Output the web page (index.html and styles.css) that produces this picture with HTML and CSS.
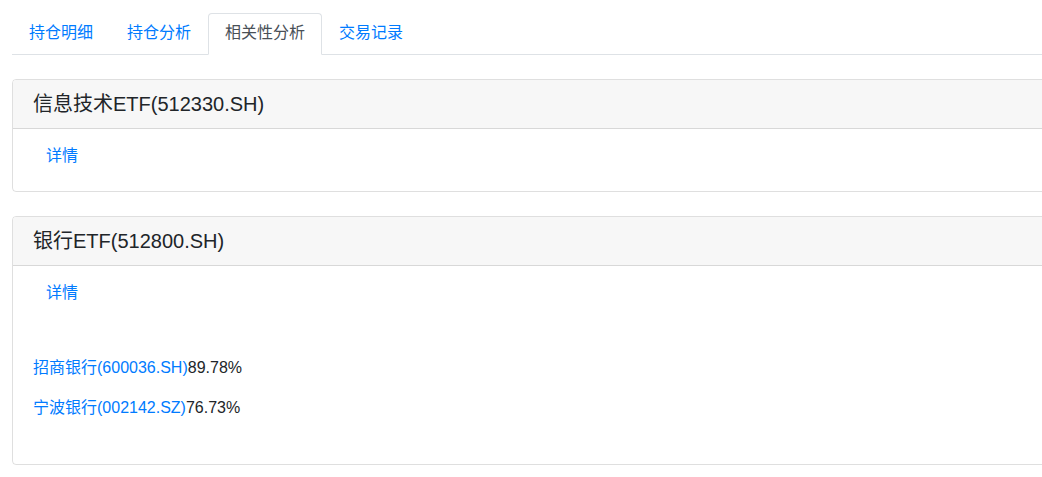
FILE: index.html
```html
<!DOCTYPE html>
<html lang="zh">
<head>
  <meta charset="UTF-8" />
  <meta name="viewport" content="width=device-width, initial-scale=1.0"/>
  <title>相关性分析</title>
  <link rel="stylesheet" href="styles.css">
</head>
<body>
  <div class="page">
    <ul class="nav-tabs">
      <li><a href="#">持仓明细</a></li>
      <li><a href="#">持仓分析</a></li>
      <li><a href="#" class="active">相关性分析</a></li>
      <li><a href="#">交易记录</a></li>
    </ul>

    <div class="card">
      <div class="card-header">信息技术ETF(512330.SH)</div>
      <div class="card-body">
        <a href="#" class="btn-link">详情</a>
      </div>
    </div>

    <div class="card">
      <div class="card-header">银行ETF(512800.SH)</div>
      <div class="card-body">
        <a href="#" class="btn-link">详情</a>
        <div class="results">
          <p><a href="#">招商银行(600036.SH)</a>89.78%</p>
          <p><a href="#">宁波银行(002142.SZ)</a>76.73%</p>
        </div>
      </div>
    </div>
  </div>
</body>
</html>
```

FILE: styles.css
```css
html {
  overflow: hidden;
}

body {
  margin: 0;
  font-family: 'Liberation Sans', 'Noto Sans CJK SC', sans-serif;
  font-size: 16px;
  line-height: 24px;
  color: #212529;
  background: #fff;
}

a {
  color: #007bff;
  text-decoration: none;
}

.page {
  width: 1140px;
  padding: 13px 0 0 12px;
}

.nav-tabs {
  display: flex;
  list-style: none;
  margin: 0 0 24px;
  padding: 0;
  border-bottom: 1px solid #dee2e6;
}

.nav-tabs li {
  margin-bottom: -1px;
}

.nav-tabs a {
  display: block;
  padding: 7px 16px 9px;
  border: 1px solid transparent;
  border-top-left-radius: 4px;
  border-top-right-radius: 4px;
}

.nav-tabs a.active {
  color: #495057;
  background: #fff;
  border-color: #dee2e6 #dee2e6 #fff;
}

.card {
  border: 1px solid rgba(0,0,0,0.125);
  border-radius: 4px;
  margin-bottom: 24px;
}

.card-header {
  padding: 12px 20px;
  background: #f7f7f7;
  border-bottom: 1px solid rgba(0,0,0,0.125);
  font-size: 20px;
  line-height: 24px;
  border-radius: 3px 3px 0 0;
}

.card-body {
  padding: 8px 20px 16px;
}

.btn-link {
  display: inline-block;
  padding: 6px 12px;
  border: 1px solid transparent;
}

.results {
  margin-top: 44px;
  padding-bottom: 28px;
}

.results p {
  margin: 0 0 16px;
}

.results p:last-child {
  margin-bottom: 0;
}
```
